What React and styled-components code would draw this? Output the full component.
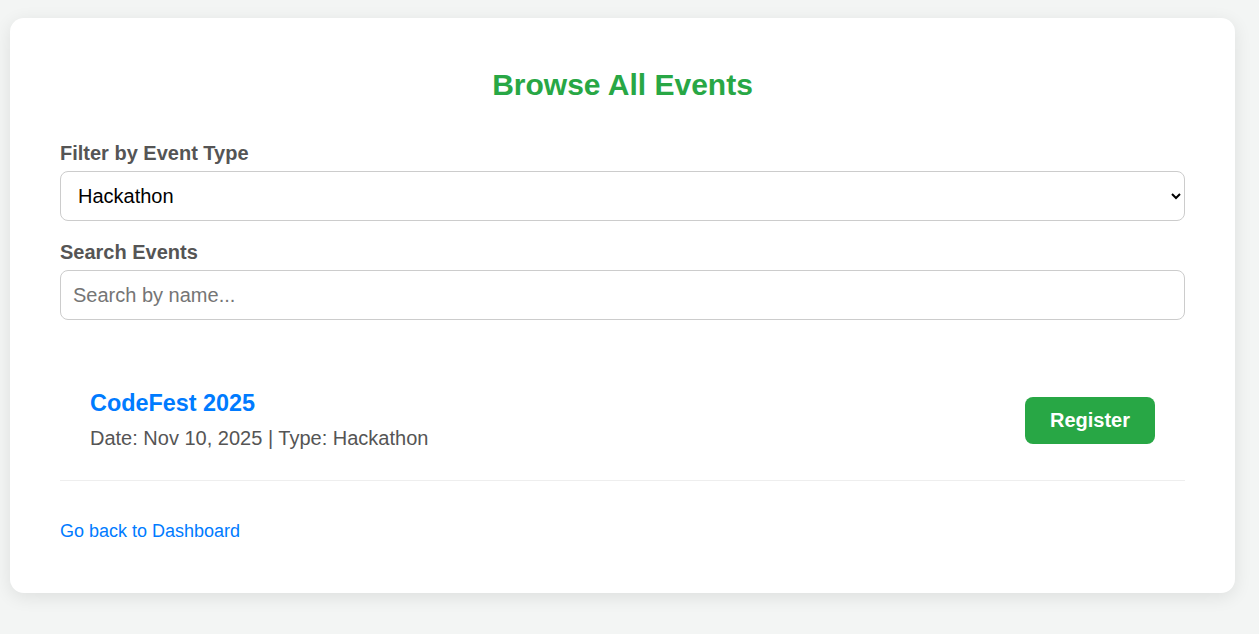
import React, { useState } from 'react';
import styled, { createGlobalStyle } from 'styled-components';

const GlobalStyle = createGlobalStyle`
    body {
        margin: 0;
        background-color: #f3f5f4;
        font-family: "Liberation Sans", Arial, sans-serif;
    }
`;

const Page = styled.div`
    padding: 18px 24px 40px 10px;
`;

const Card = styled.div`
    background: #fff;
    border-radius: 14px;
    padding: 50px 50px 51px;
    box-shadow: 0 4px 18px rgba(0, 0, 0, 0.09);
`;

const Title = styled.h2`
    margin: 0 0 40px;
    text-align: center;
    color: #28a745;
    font-size: 30px;
    line-height: 34px;
    font-weight: bold;
`;

const Field = styled.div`
    display: flex;
    flex-direction: column;
    gap: 6px;
    margin-bottom: 20px;
`;

const Label = styled.label`
    font-size: 20px;
    line-height: 23px;
    font-weight: bold;
    color: #555;
`;

const Select = styled.select`
    height: 50px;
    padding: 0 13px;
    font-size: 20px;
    font-family: inherit;
    color: #000;
    background: #fff;
    border: 1px solid #ccc;
    border-radius: 8px;
`;

const Input = styled.input`
    height: 50px;
    box-sizing: border-box;
    padding: 0 12px;
    font-size: 20px;
    font-family: inherit;
    border: 1px solid #ccc;
    border-radius: 8px;
    &::placeholder {
        color: #757575;
    }
`;

const EventList = styled.div`
    margin-top: 40px;
`;

const EventRow = styled.div`
    display: flex;
    align-items: center;
    justify-content: space-between;
    padding: 30px;
    border-bottom: 1px solid #eee;
`;

const EventName = styled.h3`
    margin: 0 0 10px;
    color: #007bff;
    font-size: 23.4px;
    line-height: 27px;
    font-weight: bold;
`;

const EventMeta = styled.p`
    margin: 0;
    color: #555;
    font-size: 20px;
    line-height: 23px;
`;

const RegisterButton = styled.button`
    padding: 12px 25px;
    background-color: #28a745;
    color: #fff;
    border: none;
    border-radius: 8px;
    font-family: inherit;
    font-size: 20px;
    line-height: 23px;
    font-weight: bold;
    cursor: pointer;
`;

const BackLink = styled.a`
    display: inline-block;
    margin-top: 40px;
    color: #007bff;
    font-size: 18px;
    line-height: 21px;
    text-decoration: none;
`;

const events = [
    { name: 'CodeFest 2025', date: 'Nov 10, 2025', type: 'Hackathon' },
];

const App = () => {
    const [type, setType] = useState('Hackathon');
    const [query, setQuery] = useState('');

    return (
        <Page>
            <GlobalStyle />
            <Card>
                <Title>Browse All Events</Title>
                <Field>
                    <Label>Filter by Event Type</Label>
                    <Select value={type} onChange={(e) => setType(e.target.value)}>
                        <option>All</option>
                        <option>Hackathon</option>
                        <option>Workshop</option>
                        <option>Seminar</option>
                    </Select>
                </Field>
                <Field>
                    <Label>Search Events</Label>
                    <Input
                        placeholder="Search by name..."
                        value={query}
                        onChange={(e) => setQuery(e.target.value)}
                    />
                </Field>
                <EventList>
                    {events.map((ev) => (
                        <EventRow key={ev.name}>
                            <div>
                                <EventName>{ev.name}</EventName>
                                <EventMeta>Date: {ev.date} | Type: {ev.type}</EventMeta>
                            </div>
                            <RegisterButton>Register</RegisterButton>
                        </EventRow>
                    ))}
                </EventList>
                <BackLink href="#">Go back to Dashboard</BackLink>
            </Card>
        </Page>
    );
};

export default App;
